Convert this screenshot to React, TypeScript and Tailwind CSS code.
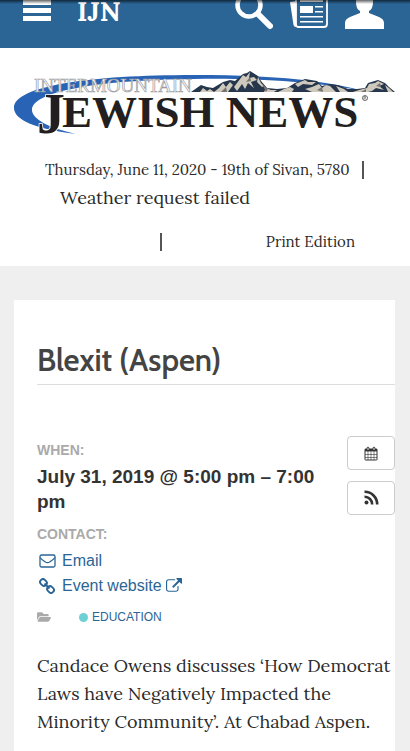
import React from "react";
import { FaFolderOpen } from "react-icons/fa";

const serif = "font-['Lora','Liberation_Serif',serif]";
const sans = "font-['Liberation_Sans',Arial,sans-serif]";

function TopBar() {
  return (
    <header className="relative flex h-12 items-start overflow-hidden bg-[#2b6596] pr-[26px] pl-[23px] text-white">
      <button type="button" aria-label="Menu" className="h-[21px] w-7">
        <svg viewBox="0 0 28 21" className="block h-[21px] w-7" fill="currentColor">
          <path d="M0 0h28v5H0zM0 8h28v5H0zM0 16h28v5H0z" />
        </svg>
      </button>
      <a href="#home" className={`ml-[26px] text-[27px] leading-[22px] font-bold ${serif}`}>
        IJN
      </a>
      <nav aria-label="Tools" className="ml-auto flex items-start gap-[17px]">
        <button type="button" aria-label="Search" className="h-[30px] w-[38px]">
          <svg viewBox="0 0 38 30" className="block h-[30px] w-[38px]" fill="none" stroke="currentColor">
            <circle cx="14" cy="5" r="11.5" strokeWidth="4.5" />
            <path d="M23 14l12 12" strokeWidth="6" strokeLinecap="round" />
          </svg>
        </button>
        <button type="button" aria-label="Newspaper" className="h-[30px] w-[38px]">
          <svg viewBox="0 0 38 30" className="block h-[30px] w-[38px]">
            <path d="M0 2l6-1v26q-2 0-2.500-2z" fill="currentColor" />
            <path d="M6-5h31v29q0 3-3 3H8q-2 0-2-3z" fill="#2b6596" stroke="currentColor" strokeWidth="1.800" />
            <path d="M10 6h13v7H10zM25 6h8v1.500h-8zM25 11h8v1.500h-8zM10 16h23v1.500H10zM10 21h23v1.500H10zM10 0h23v2H10z" fill="currentColor" />
          </svg>
        </button>
        <button type="button" aria-label="Account" className="h-[30px] w-[39px]">
          <svg viewBox="0 0 39 30" className="block h-[30px] w-[39px]" fill="currentColor">
            <path d="M11-5h17v7q0 7-4 9v2l10 4q5 2 5 6v6H0v-6q0-4 5-6l10-4v-2q-4-2-4-9z" />
          </svg>
        </button>
      </nav>
      <div className="absolute inset-x-0 top-0 h-1 bg-linear-to-b from-black/60 to-transparent" />
    </header>
  );
}

function Logo() {
  return (
    <a href="#home" aria-label="Intermountain Jewish News" className="block px-[14px]">
      <svg viewBox="0 0 382 68" className="block w-full overflow-visible">
        <path
          d="M62 60C22 55 0 46 0 34C0 12 75 1 180 1C255 1 310 6 350 17C300 8 250 4 180 5C80 6 18 18 18 36C18 45 35 54 62 60z"
          fill="#2863b5"
        />
        <path
          d="M177 18L187 11L193 13L199 14L209 8L216 6L221 7L229 0L233 -1L236 -3L244 2L247 7L253 14L263 15L273 14L281 9L291 5L303 7L308 12L316 10L324 11L334 15L343 15L351 14L354 9L364 6L371 9L375 13L381 18Z"
          fill="#26364c"
        />
        <path
          d="M186 18L189 14L193 17L196 15L200 18L205 14L209 9L212 13L216 8L219 11L214 18ZM220 13L229 1L232 3L236-2L235 4L240 3L243 6L237 8L240 14L234 9L231 15L228 10L223 17ZM244 3L247 9L250 12L248 13L243 8ZM250 18L252 14L257 16L263 16L260 18ZM264 18L270 15L276 13L280 15L278 18ZM281 10L291 6L294 8L302 8L298 11L289 10L284 13ZM291 15L298 13L305 10L308 14L312 11L316 12L322 18H298ZM322 12L330 15L334 18H326ZM339 18L345 16L353 14L355 10L361 9L364 7L370 10L365 12L370 16L362 14L358 17L354 18ZM371 11L375 14L379 18H374Z"
          fill="#cfc8bc"
        />
        <path
          d="M207 18L212 13L213 18ZM232 8L236 3L237 7ZM252 18L248 10L254 15ZM303 16L308 13L309 18ZM347 18L352 15V18ZM362 12L366 9L367 13Z"
          fill="#74736f"
        />
        <text x="20" y="18" className="font-['Liberation_Serif',serif] text-[19px]" fill="#fff" stroke="#9b9da2" strokeWidth="0.700">
          INTERMOUNTAIN
        </text>
        <g className="font-['Liberation_Serif',serif] font-bold" fill="#231f20">
          <text x="23" y="59" className="text-[56px]" stroke="#fff" strokeWidth="1.500" paintOrder="stroke">J</text>
          <text x="48" y="53" className="text-[45px]" stroke="#fff" strokeWidth="1.500" paintOrder="stroke">EWISH NEWS</text>
        </g>
        <circle cx="351" cy="24" r="2.500" fill="none" stroke="#444" strokeWidth="0.800" />
        <path d="M350 25.500v-3h1.500v1.500H350.500l1.500 1.500" fill="none" stroke="#444" strokeWidth="0.500" />
      </svg>
    </a>
  );
}

function EnvelopeIcon() {
  return (
    <svg viewBox="0 0 17 14" className="h-[14px] w-[17px]" fill="none" stroke="currentColor" strokeWidth="1.300">
      <rect x="1" y="1" width="15" height="12" rx="1.500" />
      <path d="M1 3.500q1 1.500 5 4.200q2.500 2 5 0q4-2.700 5-4.200" />
    </svg>
  );
}

function ChainIcon() {
  return (
    <svg viewBox="0 0 16 16" className="h-4 w-4" fill="none" stroke="currentColor" strokeWidth="1.900">
      <g transform="rotate(45 8 8)">
        <rect x="-0.500" y="5.200" width="7" height="5.600" rx="2.600" />
        <rect x="9.500" y="5.200" width="7" height="5.600" rx="2.600" />
        <path d="M4.500 8h7" />
      </g>
    </svg>
  );
}

function ExternalIcon() {
  return (
    <svg viewBox="0 0 1792 1664" className="h-[15px] w-4" fill="currentColor">
      <path d="M1408 928v320q0 119-84.500 203.500T1120 1536H288q-119 0-203.500-84.500T0 1248V416q0-119 84.500-203.500T288 128h704q14 0 23 9t9 23v64q0 14-9 23t-23 9H288q-66 0-113 47t-47 113v832q0 66 47 113t113 47h832q66 0 113-47t47-113V928q0-14 9-23t23-9h64q14 0 23 9t9 23zm384-864v512q0 26-19 45t-45 19-45-19l-176-176-652 652q-10 10-23 10t-23-10l-114-114q-10-10-10-23t10-23l652-652-176-176q-19-19-19-45t19-45 45-19h512q26 0 45 19t19 45z" />
    </svg>
  );
}

function CalendarIcon() {
  return (
    <svg viewBox="0 0 14 15" className="h-[15px] w-[14px]" fill="none" stroke="currentColor">
      <rect x="1" y="3" width="12" height="11" rx="0.500" />
      <path d="M1 4.200h12" strokeWidth="2.400" />
      <path d="M4 5v9M7 5v9M10 5v9M1 8.500h12M1 11.500h12" strokeWidth="0.600" />
      <path d="M4 2v2M10 2v2" strokeWidth="2.600" strokeLinecap="round" />
      <path d="M4 1.500v2.500M10 1.500v2.500" stroke="#fff" strokeWidth="0.900" />
    </svg>
  );
}

function FeedIcon() {
  return (
    <svg viewBox="0 0 15 15" className="mb-[2px] h-[15px] w-[15px]" fill="none" stroke="currentColor" strokeWidth="2.600">
      <circle cx="2.500" cy="12.500" r="2" fill="currentColor" stroke="none" />
      <path d="M0.500 6.800A7.500 7.500 0 0 1 8.200 14.500M0.500 1.800A12.500 12.500 0 0 1 13.200 14.500" />
    </svg>
  );
}

export default function App() {
  return (
    <div className="h-screen overflow-hidden bg-[#efefef] text-[#2b2b2b]">
      <TopBar />
      <section className={`bg-white pt-[26px] pb-[10px] ${serif}`}>
        <Logo />
        <div className="mt-[14px] flex h-7 items-center pl-[45px]">
          <span className="text-[15px] whitespace-nowrap">Thursday, June 11, 2020 - 19th of Sivan, 5780</span>
          <span className="ml-3 h-[18px] w-[2px] bg-[#555]" />
        </div>
        <p className="pl-[60px] text-lg leading-7">Weather request failed</p>
        <div className="mt-4 flex h-7 items-center pr-[55px] pl-40">
          <span className="h-[18px] w-[2px] bg-[#555]" />
          <a href="#print" className="ml-auto text-[15px]">Print Edition</a>
        </div>
      </section>

      <main className="mt-[34px] mr-[15px] ml-[14px] bg-white pt-10 pb-8 pl-[23px]">
        <h1 className="border-b border-[#ddd] pb-1 font-['Cabin','Lato',sans-serif] text-[31px] leading-10 font-semibold text-[#444]">
          Blexit (Aspen)
        </h1>
        <div className={`mt-[51px] flex ${sans}`}>
          <div className="min-w-0 flex-1 pt-1">
            <h2 className="text-sm leading-5 font-bold text-[#aaa]">WHEN:</h2>
            <p className="mt-1 text-[19px] leading-[25px] font-bold text-[#333]">
              July 31, 2019 @ 5:00 pm – 7:00 pm
            </p>
            <h2 className="mt-[10px] text-sm leading-5 font-bold text-[#aaa]">CONTACT:</h2>
            <div className="mt-1 text-base leading-[25px] text-[#2b6596]">
              <a href="#email" className="flex items-center gap-1.5 pl-[2px]">
                <EnvelopeIcon />
                Email
              </a>
              <a href="#website" className="flex items-center gap-1.5 pl-[2px]">
                <span className="flex w-[17px]"><ChainIcon /></span>
                <span className="flex items-center gap-1">Event website <ExternalIcon /></span>
              </a>
            </div>
            <div className="mt-[9px] flex h-5 items-center text-xs text-[#2b6596]">
              <FaFolderOpen className="h-[14px] w-[14px] text-[#aaa]" />
              <a href="#education" className="ml-7 flex items-center gap-1">
                <span className="h-[9px] w-[9px] rounded-full bg-[#6dd0d4]" />
                EDUCATION
              </a>
            </div>
          </div>
          <div className="ml-6 flex w-12 flex-col gap-[11px]">
            <button type="button" aria-label="Calendar" className="flex h-[34px] items-center justify-center rounded border border-[#ccc] bg-white text-[#333]">
              <CalendarIcon />
            </button>
            <button type="button" aria-label="Subscribe" className="flex h-[34px] items-center justify-center rounded border border-[#ccc] bg-white text-[#333]">
              <FeedIcon />
            </button>
          </div>
        </div>
        <p className={`mt-[25px] text-lg leading-7 ${serif}`}>
          Candace Owens discusses ‘How Democrat Laws have Negatively Impacted the Minority Community’. At Chabad Aspen.
        </p>
      </main>
    </div>
  );
}
